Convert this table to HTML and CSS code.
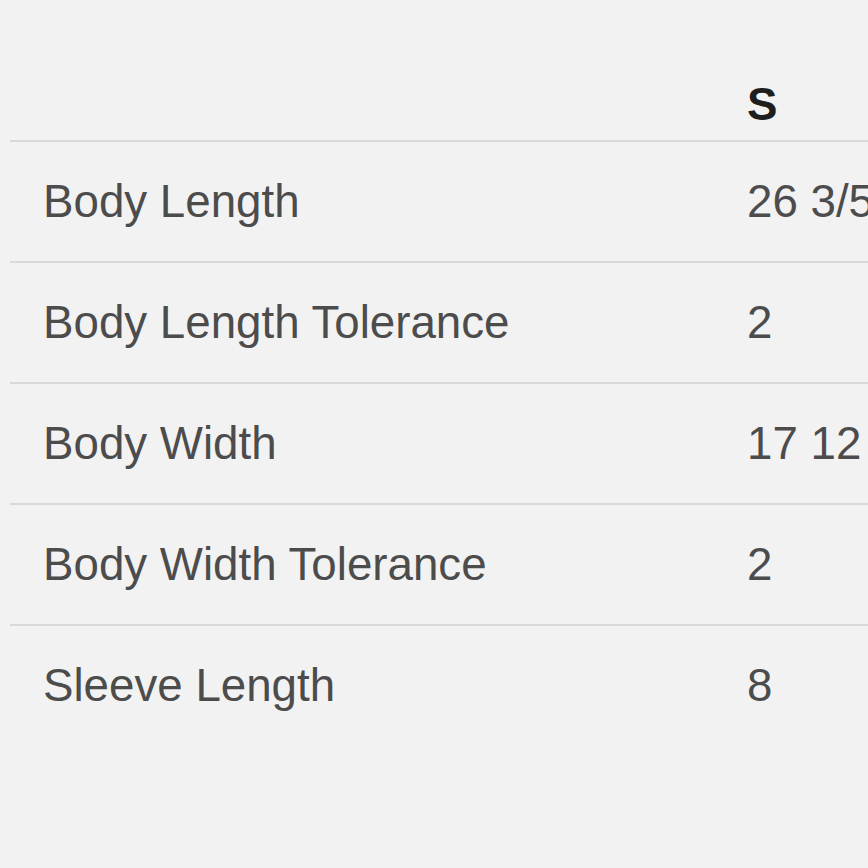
FILE: index.html
```html
<!DOCTYPE html>
<html lang="en">
<head>
<meta charset="utf-8">
<title>Size chart</title>
<link rel="stylesheet" href="styles.css">
</head>
<body>
<div class="wrap">
  <table class="sizes">
    <thead>
      <tr><th class="label"></th><th class="val">S</th></tr>
    </thead>
    <tbody>
      <tr><td class="label">Body Length</td><td class="val">26 3/5</td></tr>
      <tr><td class="label">Body Length Tolerance</td><td class="val">2</td></tr>
      <tr><td class="label">Body Width</td><td class="val">17 12</td></tr>
      <tr><td class="label">Body Width Tolerance</td><td class="val">2</td></tr>
      <tr><td class="label">Sleeve Length</td><td class="val">8</td></tr>
    </tbody>
  </table>
</div>
</body>
</html>
```
FILE: styles.css
```css
html, body {
  margin: 0;
  padding: 0;
  background: #f2f2f2;
  overflow: hidden;
  width: 868px;
  height: 868px;
}
.wrap {
  padding: 70px 0 0 10px;
  width: 1100px;
}
.sizes {
  border-collapse: collapse;
  font-family: "Liberation Sans", Arial, sans-serif;
  font-size: 45.7px;
  color: #4c4c4c;
  width: 1000px;
}
.sizes th, .sizes td {
  padding: 0;
  text-align: left;
  vertical-align: middle;
  white-space: nowrap;
}
.sizes th {
  height: 70px;
  color: #1e1e1e;
  font-weight: bold;
  border-bottom: 2px solid #d9d9d9;
}
.sizes td {
  height: 119px;
  border-bottom: 2px solid #d9d9d9;
}
.sizes tbody tr:last-child td {
  border-bottom: none;
}
.label {
  width: 704px;
  padding-left: 33px !important;
}
.val {
  padding-left: 0;
}
```
